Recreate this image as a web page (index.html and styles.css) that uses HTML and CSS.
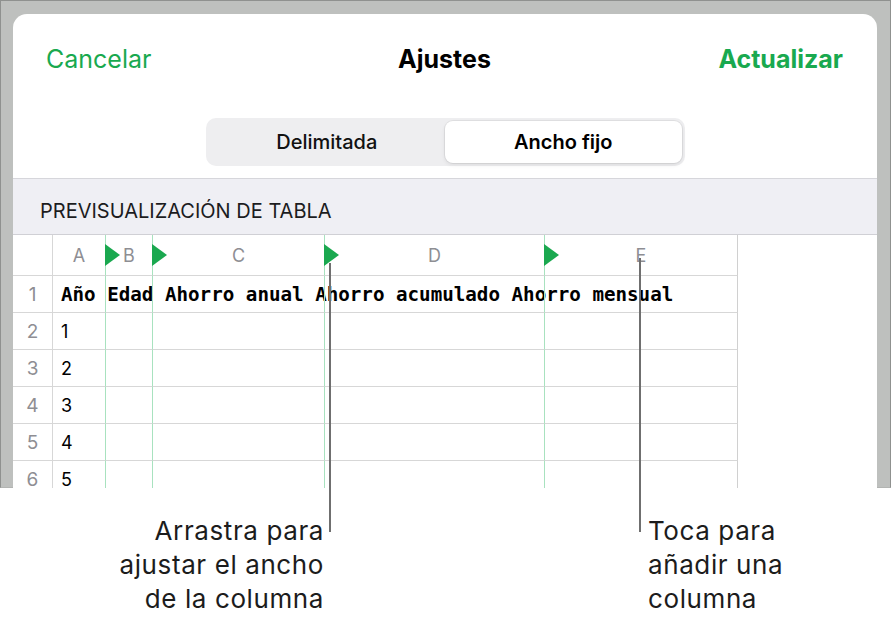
FILE: index.html
```html
<!DOCTYPE html>
<html lang="es">
<head>
    <meta charset="UTF-8">
    <meta name="viewport" content="width=device-width, initial-scale=1.0">
    <title>Ajustes - Ancho fijo</title>
    <link rel="stylesheet" href="styles.css">
</head>
<body>
  <div class="page">
    <!-- Captura de la hoja de ajustes -->
    <div class="shot">
      <div class="sheet">
        <div class="nav">
          <span class="nav-btn">Cancelar</span>
          <span class="nav-title">Ajustes</span>
          <span class="nav-btn strong">Actualizar</span>
        </div>

        <div class="segmented">
          <div class="seg">Delimitada</div>
          <div class="seg active">Ancho fijo</div>
        </div>

        <div class="band">PREVISUALIZACIÓN DE TABLA</div>

        <div class="grid">
          <!-- cabecera de columnas -->
          <div class="cell num head"></div>
          <div class="cell col head">A</div>
          <div class="cell col head handle">B</div>
          <div class="cell col head handle">C</div>
          <div class="cell col head handle">D</div>
          <div class="cell col last head handle">E</div>

          <div class="cell num">1</div>
          <div class="cell col data mono">Año Edad Ahorro anual Ahorro acumulado Ahorro mensual</div>
          <div class="cell col"></div>
          <div class="cell col"></div>
          <div class="cell col"></div>
          <div class="cell col last"></div>

          <div class="cell num">2</div>
          <div class="cell col data">1</div>
          <div class="cell col"></div>
          <div class="cell col"></div>
          <div class="cell col"></div>
          <div class="cell col last"></div>

          <div class="cell num">3</div>
          <div class="cell col data">2</div>
          <div class="cell col"></div>
          <div class="cell col"></div>
          <div class="cell col"></div>
          <div class="cell col last"></div>

          <div class="cell num">4</div>
          <div class="cell col data">3</div>
          <div class="cell col"></div>
          <div class="cell col"></div>
          <div class="cell col"></div>
          <div class="cell col last"></div>

          <div class="cell num">5</div>
          <div class="cell col data">4</div>
          <div class="cell col"></div>
          <div class="cell col"></div>
          <div class="cell col"></div>
          <div class="cell col last"></div>

          <div class="cell num">6</div>
          <div class="cell col data">5</div>
          <div class="cell col"></div>
          <div class="cell col"></div>
          <div class="cell col"></div>
          <div class="cell col last"></div>
        </div>
      </div>
    </div>

    <!-- Textos de ayuda -->
    <div class="callouts">
      <p class="callout drag">Arrastra para<br>ajustar el ancho<br>de la columna</p>
      <p class="callout add">Toca para<br>añadir una<br>columna</p>
    </div>

    <span class="leader leader-drag"></span>
    <span class="leader leader-add"></span>
  </div>
</body>
</html>
```

FILE: styles.css
```css
/* Global */
body {
    margin: 0;
    background: #fff;
    font-family: Inter, "Noto Sans", sans-serif;
    color: #1c1c1e;
}

.page {
    position: relative;
    width: 891px;
    height: 622px;
    overflow: hidden;
}

/* Screenshot frame */
.shot {
    box-sizing: border-box;
    height: 488px;
    padding: 13px 13px 0 12px;
    background: #bec0be;
    border: 1px solid #8f918f;
    border-bottom-color: #b2b4b2;
}

.sheet {
    height: 474px;
    background: #fff;
    border-radius: 14px 14px 0 0;
    overflow: hidden;
}

/* Navigation bar */
.nav {
    display: grid;
    grid-template-columns: 1fr auto 1fr;
    align-items: center;
    height: 90px;
    padding: 0 34px 0 33px;
    font-size: 25px;
}

.nav-btn {
    color: #19a94f;
}

.nav-btn.strong {
    justify-self: end;
    font-weight: 700;
}

.nav-title {
    font-weight: 700;
    color: #000;
}

/* Segmented control */
.segmented {
    box-sizing: border-box;
    display: flex;
    width: 479px;
    height: 48px;
    margin: 14px auto 12px;
    padding: 3px;
    background: #eeeef0;
    border-radius: 10px;
}

.seg {
    flex: 1;
    display: flex;
    align-items: center;
    justify-content: center;
    font-size: 20px;
    font-weight: 500;
    color: #111;
    border-radius: 8px;
}

.seg.active {
    background: #fff;
    font-weight: 600;
    color: #000;
    box-shadow: 0 0 0 1px rgba(0, 0, 0, 0.06), 0 2px 4px rgba(0, 0, 0, 0.08);
}

/* Section header */
.band {
    box-sizing: border-box;
    height: 57px;
    padding: 21px 0 0 27px;
    background: #efeff4;
    border-top: 1px solid #d6d6db;
    border-bottom: 1px solid #d0d0d5;
    font-size: 20px;
    line-height: 22px;
    color: #1c1c1e;
}

/* Table preview */
.grid {
    display: grid;
    grid-template-columns: 40px 53px 47px 172px 220px 193px;
    grid-template-rows: 41px repeat(6, 37px);
    width: 725px;
}

.cell {
    box-sizing: border-box;
    border-bottom: 1px solid #d7d7d7;
    border-right: 1px solid #a8e2bf;
    display: flex;
    align-items: center;
}

.cell.num {
    justify-content: center;
    border-right-color: #d7d7d7;
    font-size: 19px;
    color: #8e8e93;
}

.cell.last {
    border-right-color: #d0d0d0;
}

.cell.head {
    position: relative;
    justify-content: center;
    font-size: 18px;
    color: #8e8e93;
}

.cell.handle::before {
    content: "";
    position: absolute;
    left: -1px;
    top: 9px;
    border-top: 11px solid transparent;
    border-bottom: 11px solid transparent;
    border-left: 15px solid #1aa84f;
}

.cell.data {
    padding-left: 8px;
    font-size: 18px;
    color: #000;
    white-space: nowrap;
}

.cell.mono {
    font-family: "DejaVu Sans Mono", "Liberation Mono", monospace;
    font-weight: bold;
    font-size: 19.2px;
}

/* Callouts */
.callouts {
    display: flex;
    margin-top: 26px;
}

.callout {
    margin: 0;
    font-size: 26px;
    line-height: 34px;
    letter-spacing: 0.6px;
    color: #1c1c1c;
}

.callout.drag {
    width: 324px;
    text-align: right;
}

.callout.add {
    margin-left: 324px;
}

.leader {
    position: absolute;
    width: 2px;
    background: #6f6f6f;
}

.leader-drag {
    left: 329px;
    top: 263px;
    height: 269px;
}

.leader-add {
    left: 639px;
    top: 258px;
    height: 274px;
}
```
